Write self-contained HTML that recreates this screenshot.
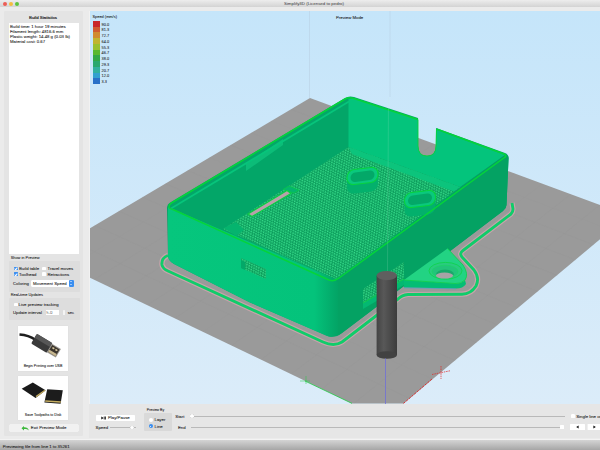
<!DOCTYPE html>
<html><head><meta charset="utf-8">
<style>
*{box-sizing:border-box;margin:0;padding:0}
html,body{width:600px;height:450px;overflow:hidden;background:#ebebeb;font-family:"Liberation Sans",sans-serif;color:#1a1a1a}
.a{position:absolute;white-space:nowrap}
#title{left:0;top:0;width:600px;height:7px;background:linear-gradient(#ededed,#d3d3d3)}
.tl{position:absolute;top:1.9px;width:4.1px;height:4.1px;border-radius:50%}
#tt{left:14px;width:600px;top:1.3px;text-align:center;font-size:4.4px;color:#3a3a3a;line-height:5px}
.t{font-size:4.3px;line-height:5.2px;-webkit-text-stroke:0.07px #1a1a1a}
.s{font-size:3.9px;line-height:4.5px;-webkit-text-stroke:0.06px #1a1a1a}
.cb{position:absolute;width:3.9px;height:3.9px;border-radius:0.6px;background:#fff;box-shadow:0 0 0.4px #bbb}
.cb.on{background:#3a8ef0}
.cb.on:after{content:"";position:absolute;left:1px;top:0.3px;width:1px;height:2px;border:solid #fff;border-width:0 0.55px 0.55px 0;transform:rotate(40deg)}
.gb{position:absolute;background:#dddddd;border-radius:1px}
.trk{position:absolute;height:0.9px;background:#b9b9b9}
.th{position:absolute;width:3.6px;height:3.6px;border-radius:50%;background:#fff;box-shadow:0 0 0.6px #888}
</style></head><body>
<div class="a" id="title">
 <div class="tl" style="left:2.6px;background:#ec5d55"></div>
 <div class="tl" style="left:9.0px;background:#f4bd3f"></div>
 <div class="tl" style="left:15.4px;background:#5ec43e"></div>
 <div class="a" id="tt">Simplify3D (Licensed to pedro)</div>
</div>

<!-- left panel -->
<div class="a" style="left:4px;top:10.5px;width:78.5px;height:425px;background:#e4e4e4;border-radius:1px"></div>
<div class="a t" style="left:4px;width:78px;top:15.2px;text-align:center;-webkit-text-stroke:0.15px #111">Build Statistics</div>
<div class="a" style="left:8.7px;top:23px;width:70.3px;height:231.3px;background:#fff"></div>
<div class="a t" style="left:10px;top:23.6px">Build time: 1 hour 19 minutes<br>Filament length: 4816.6 mm<br>Plastic weight: 14.48 g (0.03 lb)<br>Material cost: 0.67</div>

<div class="a s" style="left:10.7px;top:256px">Show in Preview</div>
<div class="gb" style="left:8.9px;top:261px;width:70.7px;height:30.6px"></div>
<div class="cb on" style="left:13.9px;top:266.6px"></div>
<div class="a t" style="left:19px;top:265.9px">Build table</div>
<div class="cb" style="left:42px;top:266.6px"></div>
<div class="a t" style="left:47.5px;top:265.9px">Travel moves</div>
<div class="cb on" style="left:13.9px;top:272.4px"></div>
<div class="a t" style="left:19px;top:271.7px">Toolhead</div>
<div class="cb" style="left:42px;top:272.4px"></div>
<div class="a t" style="left:47.5px;top:271.7px">Retractions</div>
<div class="a t" style="left:13px;top:280.6px">Coloring</div>
<div class="a" style="left:31px;top:279.6px;width:42.5px;height:7.1px;background:#fff;border-radius:1px;box-shadow:0 0 0.5px #aaa"></div>
<div class="a t" style="left:33px;top:280.8px">Movement Speed</div>
<div class="a" style="left:69px;top:279.6px;width:4.5px;height:7.1px;background:#3a8ef0;border-radius:1px"></div>
<div class="a" style="left:70.2px;top:281px;width:0;height:0;border-left:1px solid transparent;border-right:1px solid transparent;border-bottom:1.2px solid #fff"></div>
<div class="a" style="left:70.2px;top:284px;width:0;height:0;border-left:1px solid transparent;border-right:1px solid transparent;border-top:1.2px solid #fff"></div>

<div class="a s" style="left:10.7px;top:293.4px">Real-time Updates</div>
<div class="gb" style="left:8.9px;top:298px;width:70.7px;height:21.7px"></div>
<div class="cb" style="left:13.9px;top:302.6px"></div>
<div class="a t" style="left:18.6px;top:301.9px">Live preview tracking</div>
<div class="a t" style="left:13px;top:310px">Update interval</div>
<div class="a" style="left:45px;top:309.4px;width:14.6px;height:6.2px;background:#fff;border:0.3px solid #ddd"></div>
<div class="a t" style="left:46.3px;top:310.1px;color:#aaa">5.0</div>
<div class="a" style="left:62.5px;top:309.8px;width:2.2px;height:5.6px;background:#f4f4f4;border-radius:0.6px"></div>
<div class="a t" style="left:67.8px;top:310.1px;font-size:3.9px">sec</div>

<!-- image buttons -->
<div class="a" style="left:18.3px;top:325.9px;width:49.5px;height:45px;background:#fff;box-shadow:0 0 0.8px #ccc"></div>
<svg class="a" style="left:0;top:0" width="90" height="450" viewBox="0 0 90 450">
 <path d="M19.5,334.5 C26,335 30,336 35,339.5" stroke="#1e1e1e" stroke-width="2.6" fill="none"/>
 <g transform="translate(42.5,343.8) rotate(31)">
  <rect x="-10" y="-5.6" width="18.5" height="11.2" rx="1.5" fill="#3a3a3a"/>
  <rect x="-10" y="-5.6" width="18.5" height="4.5" rx="1.5" fill="#575757"/>
  <rect x="8" y="-5" width="10.5" height="10" fill="#9a9690"/>
  <rect x="9" y="-4" width="8.5" height="8" fill="#3a342c"/>
  <rect x="10.5" y="-2.6" width="2.2" height="1.6" fill="#d8c8a0"/>
  <rect x="14" y="-2.6" width="2.2" height="1.6" fill="#d8c8a0"/>
  <rect x="9" y="1.5" width="8.5" height="2.5" fill="#c8b890"/>
 </g>
</svg>
<div class="a s" style="left:18.3px;width:49.5px;text-align:center;top:363.6px;font-size:3.6px;color:#111">Begin Printing over USB</div>
<div class="a" style="left:18.3px;top:375.8px;width:49.5px;height:44px;background:#fff;box-shadow:0 0 0.8px #ccc"></div>
<svg class="a" style="left:0;top:0" width="90" height="450" viewBox="0 0 90 450">
 <polygon points="21.7,388.7 32.8,382.6 45.6,390.3 35.6,398.1" fill="#1a1a1a"/>
 <polyline points="36,396.6 45,390.3" stroke="#bfa860" stroke-width="1.3"/>
 <polygon points="47.2,389.2 62.8,390.3 60.6,403.7 44.4,402.6" fill="#1c1c1c"/>
 <polyline points="45.2,401 60.8,402" stroke="#c4ac60" stroke-width="1.4"/>
</svg>
<div class="a s" style="left:18.3px;width:49.5px;text-align:center;top:412.6px;font-size:3.6px;color:#111">Save Toolpaths to Disk</div>

<div class="a" style="left:8.7px;top:423.6px;width:70.8px;height:8.4px;background:#f1f1f1;border-radius:1px;box-shadow:0 0 0.5px #bbb"></div>
<svg class="a" style="left:20px;top:424.5px" width="10" height="7" viewBox="0 0 10 7"><path d="M1.5,3.2 L4,1 L4,2.3 C6.5,2.2 8.3,3 8.8,5.6 C7.6,4.3 6,4 4,4.1 L4,5.4 Z" fill="#3cb83c"/></svg>
<div class="a t" style="left:30.8px;top:425.4px">Exit Preview Mode</div>

<!-- viewport -->
<div class="a" style="left:88.5px;top:10.5px;width:511.5px;height:393px;background:linear-gradient(#c5e5fa,#dbecf9);border-left:1px solid #f2f2f2;overflow:hidden">
<svg width="600" height="450" viewBox="0 0 600 450" style="position:absolute;left:-89.5px;top:-10.5px">
<defs>
 <pattern id="dots" width="3" height="4.2" patternUnits="userSpaceOnUse" patternTransform="rotate(-28)">
  <rect width="3" height="4.2" fill="#0a9a5a"/>
  <ellipse cx="0.75" cy="1.05" rx="1" ry="0.9" fill="#36dc8a"/>
  <ellipse cx="2.25" cy="3.15" rx="1" ry="0.9" fill="#36dc8a"/>
 </pattern>
 <linearGradient id="cyl" x1="0" x2="1" y1="0" y2="0">
  <stop offset="0" stop-color="#444"/><stop offset="0.35" stop-color="#585858"/><stop offset="1" stop-color="#3c3c3c"/>
 </linearGradient>
 <linearGradient id="frontg" x1="0" x2="1" y1="0" y2="0">
  <stop offset="0" stop-color="#06c67d"/><stop offset="0.86" stop-color="#04c37b"/><stop offset="0.97" stop-color="#03aa6a"/><stop offset="1" stop-color="#03a465"/>
 </linearGradient>
</defs>
<!-- plate -->
<polygon points="310,98 600,205 600,239.3 403.5,403.4 352,403.4 89.3,277.3 89.3,228.7" fill="#9a9a9a"/>
<path d="M333.9,106.9 L69.0,267.0 M290.8,109.3 L611.9,230.3 M358.3,115.9 L94.7,279.3 M271.1,120.9 L594.2,245.0 M383.2,125.1 L121.1,291.9 M251.0,132.8 L576.1,260.2 M408.5,134.4 L148.0,304.7 M230.3,145.0 L557.5,275.7 M434.2,143.9 L175.5,317.9 M209.1,157.5 L538.3,291.8 M460.5,153.7 L203.7,331.3 M187.3,170.3 L518.6,308.3 M487.2,163.6 L232.4,345.0 M164.9,183.5 L498.2,325.3 M514.5,173.6 L261.9,359.0 M142.0,197.0 L477.2,342.8 M542.3,183.9 L292.0,373.4 M118.4,210.9 L455.6,360.8 M570.6,194.4 L322.8,388.1 M94.2,225.2 L433.3,379.4 M599.5,205.1 L354.3,403.1 M69.3,239.9 L410.3,398.7" stroke="#8a8a8a" stroke-width="0.5" fill="none" opacity="0.2"/>
<!-- skirt -->
<g fill="none" stroke-linejoin="round">
<path d="M168,255.5 Q161,258 162,265 Q163,269 168,271 L323,342 Q334,347 342,342 L398,299 Q402,295 408,294.5 L462,294.2 Q471,294 476,286 Q480,278 474,270 L462,257 Q459,253.5 463,250.5 L511,214 Q513,212 513,209 L512,203" stroke="#c9a3ab" stroke-width="5.2"/>
<path d="M168,255.5 Q161,258 162,265 Q163,269 168,271 L323,342 Q334,347 342,342 L398,299 Q402,295 408,294.5 L462,294.2 Q471,294 476,286 Q480,278 474,270 L462,257 Q459,253.5 463,250.5 L511,214 Q513,212 513,209 L512,203" stroke="#10cc6a" stroke-width="2.9"/>
</g>
<!-- case silhouette (inner wall colour) -->
<path d="M167,208 Q167,204 171,202 L345,98 Q349,95.5 354,97 L418,118 L418,146 Q418,156 427,156 Q436,156 436,146 L436,128 L505,153 Q509,154.5 508.5,159 L506.5,205 Q506.5,208 503,211 L342,333 Q336,338 329,336.5 L250,302.5 L174,264 Q168,261 168,255 Z" fill="#03a668"/>
<!-- inner back wall (brighter) -->
<path d="M348.5,99 L354,98 L418,119.5 L418,146 Q418,156 427,156 Q436,156 436,146 L436,129.5 L505,155 L460,187 L348.5,147 Z" fill="#04c47c"/>
<!-- right wall outer face -->
<path d="M336,279 L505,155 Q509,155 508.5,159 L506.5,205 Q506.5,208 503,211 L342,333 Q338,336 336,334 Z" fill="#04a263"/>
<!-- front wall outer face -->
<path d="M168,207 L333,278 Q337,280 338,283 L338,334 Q334,338 327,336 L250,302.5 L174,264 Q168,261 168,255 Z" fill="url(#frontg)"/>
<!-- front slot -->
<polygon points="241,258 266,269 266,279 241,268" fill="url(#dots)"/>
<polygon points="241,260 245,262 245,270 241,268" fill="#03a868"/>
<!-- ledge through opening in right wall -->
<polygon points="363,289 404,262 404,279 363,303" fill="url(#dots)"/>
<polygon points="363,303 404,279 404,285 363,309" fill="#04b872"/>
<line x1="363" y1="303" x2="404" y2="279" stroke="#10d04a" stroke-width="0.9"/>
<!-- floor -->
<polygon points="348.5,147 460,187 336,279 223,229" fill="url(#dots)"/>
<polygon points="348.5,147 460,187 454,191.5 352,154" fill="#0cc47c"/>
<!-- inner left-wall bump -->
<polygon points="246,164 283,139 283,145 246,171" fill="#0cbc78"/>
<!-- floor slot -->
<polygon points="283,189.5 289,186 299,190 294,193" fill="#05b46e" stroke="#06d040" stroke-width="0.6"/>
<polygon points="224,228 236,222 244,230 236,236" fill="#05b46e"/>
<polygon points="248,214 287,190.5 291,193.5 252,216.5" fill="#b8a0aa" stroke="#06d040" stroke-width="1.1" stroke-linejoin="round"/>
<!-- bosses -->
<g transform="translate(362.5,176) skewY(-7)">
 <rect x="-15.5" y="-7.5" width="31" height="24" rx="7" fill="#03b06c"/>
 <rect x="-15.5" y="-7.5" width="31" height="15" rx="7" fill="#0ac87d" stroke="#08d23e" stroke-width="1.1"/>
 <rect x="-12" y="-4.5" width="24" height="9.5" rx="4.7" fill="#03a868"/>
</g>
<g transform="translate(420,199) skewY(-7)">
 <rect x="-15.5" y="-7.5" width="31" height="24" rx="7" fill="#03b06c"/>
 <rect x="-15.5" y="-7.5" width="31" height="15" rx="7" fill="#0ac87d" stroke="#08d23e" stroke-width="1.1"/>
 <rect x="-12" y="-4.5" width="24" height="9.5" rx="4.7" fill="#03a868"/>
</g>
<!-- rim -->
<path d="M171,208.5 L349,101.5" fill="none" stroke="#07c47b" stroke-width="1.8"/>
<path d="M169,207 Q169,204 173,202 L345,99 Q349,97 354,98.5 L418,119.5 M436.5,129 L504,154 Q507.5,156 504.5,157.5 L339,278 Q334,282 329,280 L174,210 Q169,208.5 169,207" fill="none" stroke="#05d43a" stroke-width="1.5" stroke-linejoin="round"/>
<path d="M418,119.5 L418,146 Q418,156 427,156 Q436,156 436,146 L436.5,129" fill="none" stroke="#05d43a" stroke-width="0.9"/>
<!-- tab -->
<path d="M404,280 L455,283.5 Q461,284 465,280 L466,284 Q463,288.5 456,288.5 L404,287.5 Z" fill="#04bd74"/>
<path d="M447.5,248.5 L463,265 Q469,274 465,280 Q461,284 455,283.5 L404,280 Z" fill="#22d383"/>
<path d="M447.5,248.5 L463,265 Q469,274 465,280 Q461,284 455,283.5 L404,280" fill="none" stroke="#0fd24e" stroke-width="0.9"/>
<line x1="404" y1="287.8" x2="456" y2="288.8" stroke="#4a9ed0" stroke-width="0.6"/>
<ellipse cx="445.5" cy="270.8" rx="16.5" ry="8.4" fill="#2acb80" stroke="#0fd24e" stroke-width="0.9"/>
<ellipse cx="445" cy="271.5" rx="13" ry="6.3" fill="#22c47a" stroke="#18d860" stroke-width="0.6"/>
<path d="M436,275 Q436,270 445,269.5 Q454,270 454,275 Z" fill="#1aa86a"/>
<ellipse cx="444.5" cy="275.6" rx="8.6" ry="3" fill="#a9a2a5"/>
<!-- cylinder -->
<rect x="376.6" y="275.6" width="20.4" height="79.5" fill="url(#cyl)"/>
<ellipse cx="386.8" cy="355" rx="10.2" ry="3.8" fill="#424242"/>
<ellipse cx="386.8" cy="275.6" rx="10.2" ry="4.6" fill="#5f5f5f"/>
<!-- lines -->
<line x1="385.5" y1="358.5" x2="385.5" y2="404" stroke="#7070d8" stroke-width="0.8"/>
<line x1="309.5" y1="10" x2="309.5" y2="98" stroke="#b6cde0" stroke-width="0.5"/>
<line x1="390" y1="10" x2="390" y2="97" stroke="#b6cde0" stroke-width="0.5"/>
<line x1="388.5" y1="97" x2="387.5" y2="271" stroke="#d0f0e0" stroke-width="0.5" opacity="0.3"/>
<line x1="305" y1="381" x2="352" y2="403.4" stroke="#22cc44" stroke-width="0.8"/>
<line x1="403.5" y1="403.4" x2="432" y2="379" stroke="#e02828" stroke-width="0.9" stroke-dasharray="2.5 1"/>
<path d="M432,374.5 L450,370.8 M441,366 L441,379" stroke="#e02828" stroke-width="0.7" stroke-dasharray="1.6 0.8"/>
<path d="M300,381 L310,381 M306,376 L306,384" stroke="#22cc44" stroke-width="0.5"/>
</svg>

</div>
<!-- legend -->
<div class="a s" style="left:92.5px;top:14.8px;font-size:3.9px">Speed (mm/s)</div>
<div class="a" style="left:92.8px;top:21.1px;width:6.8px;height:63px;background:linear-gradient(#c8282a 0,#c8282a 9.09%,#d05a30 9.09%,#d05a30 18.18%,#d08a30 18.18%,#d08a30 27.27%,#c0b430 27.27%,#c0b430 36.36%,#98c030 36.36%,#98c030 45.45%,#58b830 45.45%,#58b830 54.54%,#30a848 54.54%,#30a848 63.63%,#28a870 63.63%,#28a870 72.72%,#30b0a0 72.72%,#30b0a0 81.81%,#30a0d0 81.81%,#30a0d0 90.9%,#2870c8 90.9%)"></div>
<div class="a s" style="left:101.6px;top:21.7px;font-size:3.9px;line-height:5.73px;-webkit-text-stroke:0.05px #222">90.0<br>81.3<br>72.7<br>64.0<br>55.3<br>46.7<br>38.0<br>29.3<br>20.7<br>12.0<br>3.3</div>
<div class="a t" style="left:336px;top:14.6px">Preview Mode</div>

<!-- bottom panel -->
<div class="a" style="left:88.5px;top:403.5px;width:511.5px;height:34px;background:#e6e6e6"></div>
<div class="a" style="left:96.4px;top:414.9px;width:38.4px;height:5.8px;background:#fff;border-radius:0.8px"></div>
<svg class="a" style="left:101px;top:416px" width="6" height="4" viewBox="0 0 6 4"><path d="M0.3,0.4 L2.6,2 L0.3,3.6 Z M2.8,0.4 H3.6 V3.6 H2.8 Z M4.2,0.4 H5 V3.6 H4.2 Z" fill="#111"/></svg>
<div class="a t" style="left:108px;top:415.2px">Play/Pause</div>
<div class="a t" style="left:95.6px;top:425px">Speed</div>
<div class="trk" style="left:109.5px;top:427.2px;width:26.5px"></div>
<div class="th" style="left:130px;top:425.8px"></div>
<div class="a s" style="left:146.7px;top:408.4px;font-size:3.5px">Preview By</div>
<div class="gb" style="left:144.2px;top:412.6px;width:27.8px;height:18.2px;background:#d9d9d9"></div>
<div class="a" style="left:148.8px;top:418px;width:4px;height:4px;border-radius:50%;background:#fff"></div>
<div class="a t" style="left:154.6px;top:417.4px">Layer</div>
<div class="a" style="left:148.8px;top:424.3px;width:4px;height:4px;border-radius:50%;background:#3a8ef0"></div>
<div class="a" style="left:150.1px;top:425.6px;width:1.4px;height:1.4px;border-radius:50%;background:#fff"></div>
<div class="a t" style="left:154.6px;top:423.7px">Line</div>
<div class="a t" style="left:175.3px;top:413.6px">Start</div>
<div class="trk" style="left:190.5px;top:415.8px;width:374.5px"></div>
<div class="th" style="left:190px;top:414.4px"></div>
<div class="a t" style="left:177.9px;top:425px">End</div>
<div class="trk" style="left:190.5px;top:427.2px;width:370px"></div>
<div class="a" style="left:559.6px;top:425.2px;width:4px;height:4px;background:#fff;border-radius:0.5px"></div>
<div class="cb" style="left:571px;top:414.2px"></div>
<div class="a t" style="left:576.2px;top:413.6px">Single line only</div>
<div class="a" style="left:570px;top:424px;width:15px;height:6px;background:#fff;border-radius:0.6px"></div>
<div class="a" style="left:576px;top:424px;width:0;height:0"></div>
<svg class="a" style="left:570px;top:424px" width="30" height="6" viewBox="0 0 30 6"><path d="M6.2,3 L8.6,1.4 L8.6,4.6 Z" fill="#111"/><rect x="17.6" y="0" width="15" height="6" rx="0.6" fill="#fff"/><path d="M25.8,3 L23.4,1.4 L23.4,4.6 Z" fill="#111"/></svg>
<!-- status bar -->
<div class="a" style="left:0;top:439.4px;width:600px;height:1px;background:#f3f3f3"></div><div class="a" style="left:0;top:440.4px;width:600px;height:9.6px;background:linear-gradient(#d4d4d4,#a6a6a6)"></div>
<div class="a t" style="left:2.7px;top:443.6px">Previewing file from line 1 to 35261</div>
</body></html>
